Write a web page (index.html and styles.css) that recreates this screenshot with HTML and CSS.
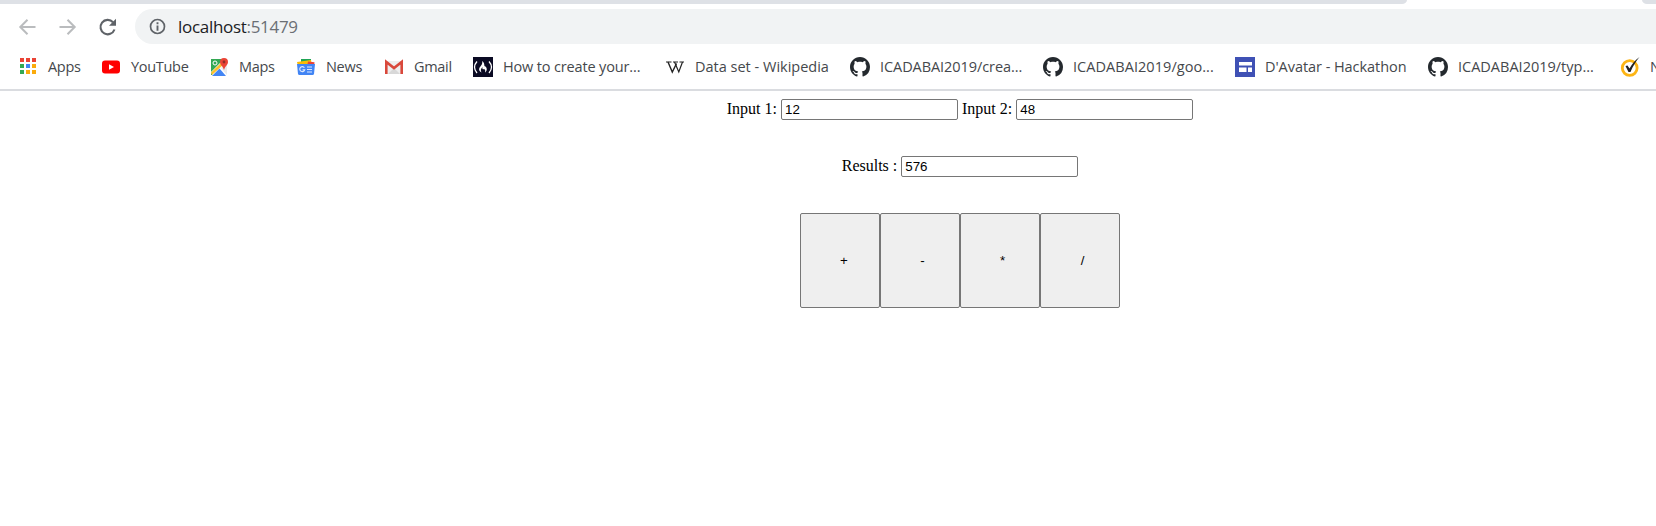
FILE: index.html
```
<!DOCTYPE html>
<html lang="en">
<head>
<meta charset="utf-8">
<title>localhost:51479</title>
<link rel="stylesheet" href="styles.css">
</head>
<body>
<svg class="defs" width="0" height="0" aria-hidden="true">
  <symbol id="github" viewBox="0 0 16 16"><path fill="#24292e" fill-rule="evenodd" d="M8 0C3.58 0 0 3.58 0 8c0 3.54 2.29 6.53 5.47 7.59.4.07.55-.17.55-.38 0-.19-.01-.82-.01-1.49-2.01.37-2.53-.49-2.69-.94-.09-.23-.48-.94-.82-1.13-.28-.15-.68-.52-.01-.53.63-.01 1.08.58 1.23.82.72 1.21 1.87.87 2.33.66.07-.52.28-.87.51-1.07-1.78-.2-3.64-.89-3.64-3.95 0-.87.31-1.59.82-2.15-.08-.2-.36-1.02.08-2.12 0 0 .67-.21 2.2.82.64-.18 1.32-.27 2-.27s1.36.09 2 .27c1.53-1.04 2.2-.82 2.2-.82.44 1.1.16 1.92.08 2.12.51.56.82 1.27.82 2.15 0 3.07-1.87 3.75-3.65 3.95.29.25.54.73.54 1.48 0 1.07-.01 1.93-.01 2.2 0 .21.15.46.55.38A8.01 8.01 0 0 0 16 8c0-4.42-3.58-8-8-8z"/></symbol>
</svg>
<header class="browser">
  <div class="tabs"><div class="tabs-left"></div><div class="tabs-active"></div><div class="tabs-right"></div></div>
  <div class="toolbar">
    <svg class="nav" viewBox="0 0 20 20"><path d="M18.500 10H3.500M10.500 2.800L3.300 10l7.200 7.200" fill="none" stroke="#babcbe" stroke-width="2"/></svg>
    <svg class="nav" viewBox="0 0 20 20"><path d="M2.500 10h15M10.500 2.800l7.200 7.200-7.200 7.200" fill="none" stroke="#babcbe" stroke-width="2"/></svg>
    <svg class="nav" viewBox="0 0 20 20"><path d="M17.500 12.500A7.200 7.200 0 1 1 16 5.200" fill="none" stroke="#5f6368" stroke-width="2.1"/><path d="M19 1.800v7h-7z" fill="#5f6368"/></svg>
    <div class="address">
      <svg class="info" viewBox="0 0 18 18"><circle cx="9" cy="9" r="7.4" fill="none" stroke="#5f6368" stroke-width="1.8"/><path d="M8 4.5h2v2H8zM8 8h2v5.4H8z" fill="#5f6368"/></svg>
      <div class="url"><span class="host">localhost</span>:51479</div>
    </div>
  </div>
  <nav class="bookmarks">
    <a class="mark apps"><svg viewBox="0 0 20 20"><path fill="#ea4335" d="M2 1h4v4H2zM8 1h4v4H8zM14 1h4v4h-4z"/><path fill="#34a853" d="M2 7h4v4H2zM2 13h4v4H2z"/><path fill="#4285f4" d="M8 7h4v4H8z"/><path fill="#fbab0c" d="M14 7h4v4h-4zM8 13h4v4H8zM14 13h4v4h-4z"/></svg><span>Apps</span></a>
    <a class="mark youtube"><svg viewBox="0 0 20 20"><rect x="1" y="3.5" width="18" height="13" rx="3" fill="#f00"/><path d="M8 7.3l5 2.7-5 2.8z" fill="#fff"/></svg><span>YouTube</span></a>
    <a class="mark maps"><svg viewBox="0 0 20 20"><path fill="#34a853" d="M2 2h13v5L3 18H2z"/><path fill="#e8eaed" d="M15 5l3 3v10L11 10z"/><path fill="#fff" d="M2 15L14 3l3 3L4 19z"/><path fill="#fbc02d" d="M2 15.5L13 5l2 2L3 18z"/><path fill="#4285f4" d="M3 19l7.5-7.5L17 19z"/><circle cx="6" cy="6" r="2" fill="none" stroke="#fff"/><path fill="#ea4335" d="M15 1a4 4 0 0 1 4 4c0 3-3 4-4 8-1-4-4-5-4-8a4 4 0 0 1 4-4z"/><circle cx="15" cy="5" r="1.4" fill="#8f2d25"/></svg><span>Maps</span></a>
    <a class="mark news"><svg viewBox="0 0 20 20"><path fill="#20a454" d="M5 2h10v8H5z"/><path fill="#fbbc04" d="M1 5l14-2 1 6H2z"/><path fill="#ea4335" d="M12 4.5l6.5.8L18 10h-7z"/><path fill="#4285f4" d="M1 7h18l-1 10a1.5 1.5 0 0 1-1.5 1h-13A1.5 1.5 0 0 1 2 17z"/><path d="M8.4 10.8a2.5 2.5 0 1 0 .3 2H6.500M11 10h5M11 12.500h5M11 15h5" fill="none" stroke="#dce8fd" stroke-width="1.200"/></svg><span>News</span></a>
    <a class="mark gmail"><svg viewBox="0 0 20 20"><path fill="#eee" d="M1 4h18v13H1z"/><path fill="#d8d8d8" d="M4 17l6-6 6 6z"/><path d="M2.300 17V5L10 11l7.700-6v12" fill="none" stroke="#d9483b" stroke-width="2.600"/></svg><span>Gmail</span></a>
    <a class="mark create"><svg viewBox="0 0 20 20"><path fill="#0a0a23" d="M0 0h20v20H0z"/><path d="M4 4.500Q-1 10 4 16M16 4.500q5 5.500 0 11.500" fill="none" stroke="#fff" stroke-width="1.300"/><path fill="#fff" d="M9 4c4 3 1 5 3.500 5.500 0-1 0-1 0 0 2 2 1.500 4.500-.5 6 .5-2 .3-3-1-3.500-1 .8-2 0-1.500-2-2 2-2 3.500-1 5.500C4 13 7 10 8.500 8c.8-1.500 1-2.500.5-4z"/></svg><span>How to create your...</span></a>
    <a class="mark wiki"><svg viewBox="0 0 20 20"><path d="M1 5h5.500M8 5h5M14.500 5H19" stroke="#222" stroke-width="1"/><path d="M3 5l4.300 10L11.500 6.500" fill="none" stroke="#222" stroke-width="1.400"/><path d="M9.500 5l4.300 10L17.500 5" fill="none" stroke="#222" stroke-width="1.200"/></svg><span>Data set - Wikipedia</span></a>
    <a class="mark crea"><svg><use href="#github"/></svg><span>ICADABAI2019/crea...</span></a>
    <a class="mark goo"><svg><use href="#github"/></svg><span>ICADABAI2019/goo...</span></a>
    <a class="mark avatar"><svg viewBox="0 0 20 20"><path fill="#3f51b5" d="M0 0h20v20H0z"/><path fill="#fff" d="M4 5h13v3.500H4zM4 10.500h7.500V15H4zM13 10.500h4V15h-4z"/></svg><span>D'Avatar - Hackathon</span></a>
    <a class="mark typ"><svg><use href="#github"/></svg><span>ICADABAI2019/typ...</span></a>
    <a class="mark norton"><svg viewBox="0 0 20 20"><circle cx="9.700" cy="11" r="7.400" fill="#fff" stroke="#fdb515" stroke-width="2.800"/><path d="M5.500 9l2-.5 2 3C12 7 15 3 19.500 0 15.500 5 13 9 10.500 15H8.500z" fill="#222"/></svg><span>N</span></a>
  </nav>
</header>
<main class="page">
  <div class="row">Input 1: <input type="text" value="12"> Input 2: <input type="text" value="48"></div>
  <div class="row">Results : <input type="text" value="576"></div>
  <div class="keys"><button class="plus">+</button><button>-</button><button>*</button><button>/</button></div>
</main>
</body>
</html>
```
FILE: styles.css
```
html { overflow: hidden; background: #fff; }
body { margin: 0; height: 526px; overflow: hidden; background: #fff; }
.defs { display: block; }

.browser {
  box-sizing: border-box;
  height: 91px;
  border-bottom: 2px solid #dadce0;
  font-family: "Segoe UI", "Open Sans", sans-serif;
}
.tabs { display: flex; height: 4px; background: #fff; }
.tabs-left { width: 1407px; background: #dee1e6; border-bottom-right-radius: 5px 4px; }
.tabs-active { width: 235px; }
.tabs-right { flex: 1; background: #dee1e6; border-bottom-left-radius: 5px 4px; }

.toolbar { display: flex; align-items: center; gap: 20px; height: 45px; padding-left: 17px; }
.nav { width: 20px; height: 20px; }
.address {
  display: flex;
  align-items: center;
  flex: 1;
  height: 35px;
  margin-left: -2px;
  padding-left: 14px;
  gap: 11px;
  border-radius: 18px 0 0 18px;
  background: #f1f3f4;
}
.info { width: 17px; height: 17px; }
.url { padding-left: 1px; font-size: 17px; line-height: 34px; letter-spacing: -0.3px; color: #6b6f74; }
.host { color: #202124; }

.bookmarks { display: flex; height: 36px; padding-left: 18px; align-items: center; overflow: hidden; }
.mark {
  display: flex;
  flex: none;
  align-items: center;
  gap: 10px;
  font-size: 14.5px;
  line-height: 20px;
  letter-spacing: -0.3px;
  color: #45484c;
  white-space: nowrap;
}
.mark svg { width: 20px; height: 20px; flex: none; }
.apps { width: 83px; }
.youtube { width: 108px; }
.maps { width: 87px; }
.news { width: 88px; }
.gmail { width: 89px; }
.create { width: 192px; letter-spacing: -0.15px; }
.wiki { width: 185px; letter-spacing: 0; }
.crea { width: 193px; letter-spacing: -0.07px; }
.goo { width: 192px; letter-spacing: 0.05px; }
.avatar { width: 193px; letter-spacing: -0.05px; }
.typ { width: 192px; letter-spacing: 0; }

.page {
  width: 1904px;
  padding: 8px;
  font: 16px "Liberation Serif", "Times New Roman", serif;
  color: #000;
  text-align: center;
}
.row { height: 57px; }
.row input {
  box-sizing: border-box;
  width: 177px;
  height: 21px;
  margin: 0;
  padding: 1px 2px 1px 3px;
  border: 1px solid #767676;
  border-radius: 2px;
  background: #fff;
  color: #000;
  font: 13.333px "Liberation Sans", Arial, sans-serif;
}
.keys { display: flex; justify-content: center; }
.keys button {
  box-sizing: border-box;
  width: 80px;
  height: 95px;
  padding: 1px 0 1px 5px;
  border: 1px solid #767676;
  border-radius: 2px;
  background: #efefef;
  color: #000;
  font: 13.333px "Liberation Sans", Arial, sans-serif;
}
.keys .plus { padding-left: 8px; }
```
